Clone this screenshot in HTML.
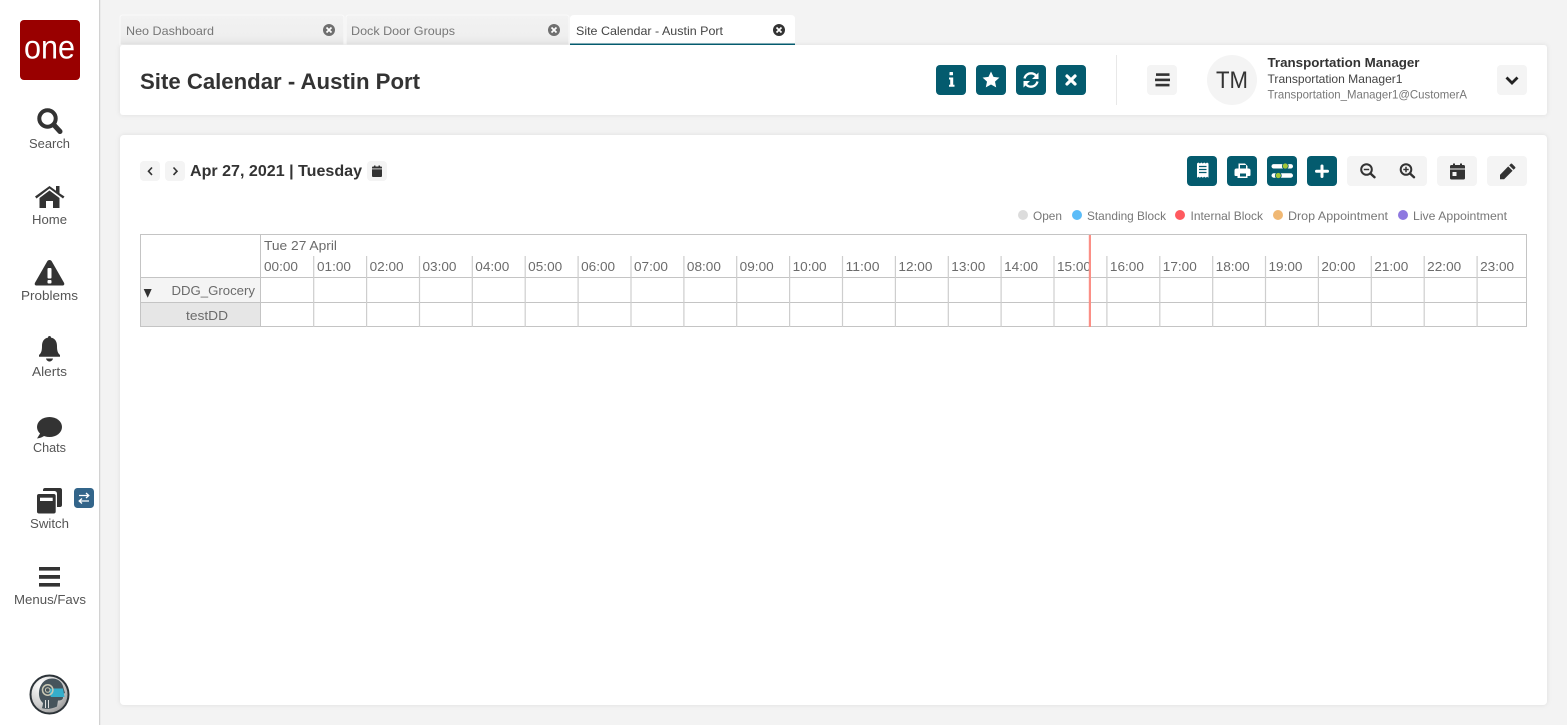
<!DOCTYPE html>
<html lang="en">
<head>
<meta charset="utf-8">
<title>Site Calendar - Austin Port</title>
<style>
html,body{margin:0;padding:0;width:1567px;height:725px;overflow:hidden;background:#f3f3f3}
svg{display:block}
text{font-family:"Liberation Sans",sans-serif;white-space:pre}
.n{font-size:13px;fill:#555}
.h{font-size:13px;fill:#6b6b6b}
.l{font-size:12px;fill:#777}
</style>
</head>
<body>
<svg width="1567" height="725" viewBox="0 0 1567 725" xmlns="http://www.w3.org/2000/svg">
<defs>
<filter id="sh" x="-2%" y="-10%" width="104%" height="120%"><feDropShadow dx="0" dy="0" stdDeviation="2.500" flood-color="#000" flood-opacity=".09"/></filter>
<radialGradient id="av" cx=".3" cy=".25" r=".95"><stop offset="0" stop-color="#ffffff"/><stop offset=".6" stop-color="#c9c9c9"/><stop offset="1" stop-color="#7d7d7d"/></radialGradient>
<linearGradient id="tb" x1="0" y1="0" x2="0" y2="1"><stop offset="0" stop-color="#f2f2f2"/><stop offset=".7" stop-color="#efefef"/><stop offset="1" stop-color="#e6e6e6"/></linearGradient>
</defs>

<!-- sidebar -->
<rect x="0" y="0" width="99" height="725" fill="#fff"/>
<rect x="99" y="0" width="1" height="725" fill="#d2d2d2"/>
<rect x="100" y="0" width="1" height="725" fill="#ebebeb"/>
<rect x="20" y="20" width="60" height="60" rx="4" fill="#990000"/>
<text x="24" y="58.500" fill="#fff" textLength="51" lengthAdjust="spacingAndGlyphs" style="font-size:33px">one</text>

<g fill="#333" stroke="none">
<circle cx="47.500" cy="118.500" r="8.200" fill="none" stroke="#333" stroke-width="4"/>
<line x1="54" y1="125" x2="60" y2="131.500" stroke="#333" stroke-width="5" stroke-linecap="round"/>
<path d="M35 196.500L49.500 186l6.500 4.700V186h3.500v7.300L64.500 196.500l-1.500 2L49.500 188.500 36.500 198.500z"/>
<path d="M39.500 198L49.500 190.500 59.500 198V208H53V201H46V208H39.500z"/>
<path d="M49.500 260c1.200 0 2 .8 2.500 1.700l12 21c.8 1.600 0 2.800-1.800 2.800H36.800c-1.800 0-2.600-1.200-1.800-2.800l12-21c.5-.9 1.300-1.700 2.500-1.700z"/>
<rect x="47.500" y="268" width="4" height="10.500" rx="1" fill="#fff"/>
<rect x="47.500" y="280" width="4" height="3.500" rx="1" fill="#fff"/>
<path d="M49.500 336c.9 0 1.500.6 1.500 1.600 4.200.8 6 4.200 6 8.400 0 5 .8 7 3 9v1.800H39v-1.800c2.200-2 3-4 3-9 0-4.200 1.800-7.600 6-8.400 0-1 .6-1.600 1.500-1.600z"/>
<path d="M46 358.500h7c-.4 1.800-1.800 3-3.500 3s-3.100-1.200-3.500-3z"/>
<ellipse cx="49.500" cy="427" rx="12.500" ry="10"/>
<path d="M41 432l-4 6.500c3.500-.4 7-2 9-4z"/>
<path d="M45 488h15c1.200 0 2 .8 2 2v15c0 1.200-.8 2-2 2h-3v-13c0-2-1-3-3-3H43v-1c0-1.200.8-2 2-2z"/>
<rect x="37" y="494" width="18.700" height="19.500" rx="2"/>
<rect x="40" y="497.700" width="12.700" height="3.300" fill="#fff"/>
<rect x="39" y="567" width="21" height="3.600"/>
<rect x="39" y="575" width="21" height="3.800"/>
<rect x="39" y="583" width="21" height="3.600"/>
</g>
<rect x="74" y="488" width="20" height="20" rx="3.500" fill="#33658a"/>
<path d="M79 495.500h9.500M86 493l2.800 2.500-2.800 2.500M89 501h-9.500M82 498.500L79.200 501l2.800 2.500" fill="none" stroke="#fff" stroke-width="1.300"/>

<text class="n" x="29" y="148" textLength="41" lengthAdjust="spacingAndGlyphs">Search</text>
<text class="n" x="32" y="224" textLength="35" lengthAdjust="spacingAndGlyphs">Home</text>
<text class="n" x="21" y="300" textLength="57" lengthAdjust="spacingAndGlyphs">Problems</text>
<text class="n" x="32" y="376" textLength="35" lengthAdjust="spacingAndGlyphs">Alerts</text>
<text class="n" x="33" y="452" textLength="33" lengthAdjust="spacingAndGlyphs">Chats</text>
<text class="n" x="30" y="528" textLength="39" lengthAdjust="spacingAndGlyphs">Switch</text>
<text class="n" x="14" y="604" textLength="72" lengthAdjust="spacingAndGlyphs">Menus/Favs</text>

<!-- avatar -->
<circle cx="49.500" cy="694.500" r="19" fill="url(#av)" stroke="#2c3338" stroke-width="2"/>
<path d="M42 708c.5-2 1-3.500 1-5-2.500-2-4.500-6-4-11 .7-8 6-13.500 13-13.500 6 0 10.500 3.500 11.500 9.500l1.500 5-2 1v3.500c0 2.200-2 3-5 3l-1 6c-5 2.500-11 3-15.500 1.500z" fill="#46545c"/>
<path d="M50 688.500h13l1.500 8.500H51c-1.500-2.500-2-6-1-8.500z" fill="#35aecb"/>
<circle cx="47.700" cy="690" r="5.200" fill="none" stroke="#c9c8b4" stroke-width="1.500"/>
<circle cx="47.700" cy="690" r="2.300" fill="none" stroke="#c9c8b4" stroke-width="1"/>
<path d="M45.500 700v8M48.500 700v8" stroke="#e0e0e0" stroke-width="1"/>

<!-- tabs -->
<path d="M120 45V18q0-3 3-3h218q3 0 3 3v27z" fill="url(#tb)" stroke="#fafafa" stroke-width="1"/>
<path d="M346 45V18q0-3 3-3h217q3 0 3 3v27z" fill="url(#tb)" stroke="#fafafa" stroke-width="1"/>
<path d="M570 45V19q0-4 4-4h217q4 0 4 4v26z" fill="#fff"/>
<text class="l" x="126" y="35" textLength="88" lengthAdjust="spacingAndGlyphs">Neo Dashboard</text>
<text class="l" x="351" y="35" textLength="104" lengthAdjust="spacingAndGlyphs">Dock Door Groups</text>
<text class="l" x="576" y="35" textLength="147" lengthAdjust="spacingAndGlyphs" style="fill:#444">Site Calendar - Austin Port</text>
<g stroke="#fff" stroke-width="1.700">
<circle cx="329" cy="30" r="6" fill="#6f6f6f" stroke="none"/><path d="M326.500 27.500l5 5m0-5l-5 5"/>
<circle cx="554" cy="30" r="6" fill="#6f6f6f" stroke="none"/><path d="M551.500 27.500l5 5m0-5l-5 5"/>
<circle cx="779" cy="30" r="6" fill="#333" stroke="none"/><path d="M776.500 27.500l5 5m0-5l-5 5"/>
</g>

<!-- header card -->
<rect x="120" y="45" width="1427" height="70" rx="3" fill="#fff" filter="url(#sh)"/>
<rect x="570" y="43.500" width="225" height="1.500" fill="#045b6e"/>
<text x="140" y="89" font-weight="700" style="font-size:22px;fill:#333" textLength="280" lengthAdjust="spacingAndGlyphs">Site Calendar - Austin Port</text>
<g fill="#045b6e">
<rect x="936" y="65" width="30" height="30" rx="4"/>
<rect x="976" y="65" width="30" height="30" rx="4"/>
<rect x="1016" y="65" width="30" height="30" rx="4"/>
<rect x="1056" y="65" width="30" height="30" rx="4"/>
</g>
<g fill="#fff">
<rect x="949.500" y="72" width="3.500" height="3.300" rx=".6"/>
<path d="M949 77.500h4.200v7.300h1.300v2h-5.500v-2h1.200v-5.300H949z"/>
<path d="M991 71.500l2.500 5.400 5.900.7-4.400 4 1.200 5.800-5.200-2.900-5.200 2.900 1.200-5.800-4.400-4 5.900-.7z"/>
</g>
<g fill="none" stroke="#fff" stroke-width="2.300">
<path d="M1024.500 78.500c.7-3 3.300-5.200 6.500-5.200 2.200 0 4 1 5.200 2.500"/>
<path d="M1037.500 81.500c-.7 3-3.300 5.200-6.500 5.200-2.200 0-4-1-5.200-2.500"/>
<path d="M1067 76l8 8m0-8l-8 8" stroke-width="3.200" stroke-linecap="round"/>
</g>
<path d="M1038.500 72.500v6.500h-6.500zM1023.500 87.500V81h6.500z" fill="#fff"/>
<rect x="1116" y="55" width="1" height="50" fill="#e8e8e8"/>
<rect x="1147" y="65" width="30" height="30" rx="4" fill="#f4f4f4"/>
<g fill="#333">
<rect x="1156" y="73.300" width="13.500" height="2.600"/>
<rect x="1155" y="78.600" width="15" height="2.600"/>
<rect x="1155.500" y="83.800" width="14" height="2.600"/>
</g>
<circle cx="1232" cy="80" r="25" fill="#f4f4f4"/>
<text x="1216" y="88" style="font-size:24px;fill:#333" textLength="32" lengthAdjust="spacingAndGlyphs">TM</text>
<text x="1267.500" y="67" font-weight="700" style="font-size:13px;fill:#333" textLength="152" lengthAdjust="spacingAndGlyphs">Transportation Manager</text>
<text x="1267.500" y="83" style="font-size:12px;fill:#444" textLength="135" lengthAdjust="spacingAndGlyphs">Transportation Manager1</text>
<text x="1267.500" y="98.500" style="font-size:12px;fill:#777" textLength="199.500" lengthAdjust="spacingAndGlyphs">Transportation_Manager1@CustomerA</text>
<rect x="1497" y="65" width="30" height="30" rx="4" fill="#f4f4f4"/>
<path d="M1506.500 77.500l5.500 5.500 5.500-5.500" fill="none" stroke="#222" stroke-width="2.800"/>

<!-- main card -->
<rect x="120" y="135" width="1427" height="570" rx="4" fill="#fff" filter="url(#sh)"/>

<!-- date nav -->
<rect x="140" y="161" width="20" height="20" rx="4" fill="#f4f4f4"/>
<rect x="165" y="161" width="20" height="20" rx="4" fill="#f4f4f4"/>
<rect x="367" y="161" width="20" height="20" rx="4" fill="#f4f4f4"/>
<path d="M152 167.500l-3.500 3.700 3.500 3.700M173.500 167.500l3.500 3.700-3.500 3.700" fill="none" stroke="#333" stroke-width="1.600"/>
<text x="190" y="176" font-weight="700" style="font-size:16px;fill:#333" textLength="172" lengthAdjust="spacingAndGlyphs">Apr 27, 2021 | Tuesday</text>
<path d="M373 166.500h8a1 1 0 0 1 1 1V176a1 1 0 0 1-1 1h-8a1 1 0 0 1-1-1v-8.500a1 1 0 0 1 1-1z" fill="#333"/>
<rect x="374" y="165.500" width="1.500" height="2" fill="#333"/><rect x="378.500" y="165.500" width="1.500" height="2" fill="#333"/>
<rect x="372" y="168.500" width="10" height=".8" fill="#f4f4f4"/>

<!-- toolbar -->
<g fill="#045b6e">
<rect x="1187" y="156" width="30" height="30" rx="4"/>
<rect x="1227" y="156" width="30" height="30" rx="4"/>
<rect x="1267" y="156" width="30" height="30" rx="4"/>
<rect x="1307" y="156" width="30" height="30" rx="4"/>
</g>
<path d="M1197 163.500l1.400-1 1.500 1 1.400-1 1.500 1 1.400-1 1.500 1 1.400-1 1.400 1v14.300l-1.400-1-1.400 1-1.500-1-1.400 1-1.500-1-1.400 1-1.500-1-1.400 1z" fill="#fff"/>
<path d="M1199 166.500h7.500M1199 169.500h7.500M1199 172.500h7.500" stroke="#045b6e" stroke-width="1.300"/>
<path d="M1238.500 163.500h6.500l2.500 2.500v2.500h1q2 0 2 2v4.500q0 1-1 1h-2v2h-10v-2h-2q-1 0-1-1v-4.500q0-2 2-2h2z" fill="#fff"/>
<rect x="1240" y="165" width="6" height="3.500" fill="#045b6e"/>
<rect x="1240" y="173.500" width="6" height="3" fill="#045b6e"/>
<rect x="1271.500" y="164.100" width="21.500" height="4.400" rx="2.200" fill="#fff"/>
<rect x="1271.500" y="173.300" width="21.500" height="4.400" rx="2.200" fill="#fff"/>
<circle cx="1285.300" cy="166" r="3" fill="#a4c639" stroke="#045b6e" stroke-width=".8"/>
<circle cx="1278.300" cy="175.500" r="3" fill="#a4c639" stroke="#045b6e" stroke-width=".8"/>
<path d="M1322 166v10.500M1316.500 171.200h11" stroke="#fff" stroke-width="3" stroke-linecap="round"/>
<rect x="1347" y="156" width="80" height="30" rx="4" fill="#f4f4f4"/>
<rect x="1437" y="156" width="40" height="30" rx="4" fill="#f4f4f4"/>
<rect x="1487" y="156" width="40" height="30" rx="4" fill="#f4f4f4"/>
<g fill="none" stroke="#333">
<circle cx="1366.500" cy="169.500" r="5.300" stroke-width="2"/>
<circle cx="1406" cy="169.500" r="5.300" stroke-width="2"/>
<path d="M1370.500 173.500l4 3.700M1410 173.500l4 3.700" stroke-width="2.400" stroke-linecap="round"/>
<path d="M1363.800 169.500h5.400M1403.300 169.500h5.400M1406 166.800v5.400" stroke-width="1.500"/>
</g>
<path d="M1451.500 165h12a1.500 1.500 0 0 1 1.500 1.500V178a1.500 1.500 0 0 1-1.500 1.500h-12A1.500 1.500 0 0 1 1450 178v-11.500a1.500 1.500 0 0 1 1.500-1.500z" fill="#333"/>
<rect x="1453" y="163.500" width="2" height="3" fill="#333"/><rect x="1460" y="163.500" width="2" height="3" fill="#333"/>
<rect x="1450" y="168.500" width="15" height="1" fill="#f4f4f4"/>
<rect x="1452.500" y="172" width="4" height="4" fill="#f4f4f4"/>
<path d="M1512 163.800l3.200 3.200a.9.9 0 0 1 0 1.200l-1.600 1.600-4.400-4.400 1.600-1.600a.8.8 0 0 1 1.200 0zM1508.200 166.400l4.400 4.400-8.500 8.400-4.100.1v-4.400z" fill="#333"/>

<!-- legend -->
<circle cx="1023" cy="215" r="5" fill="#dcdcdc"/>
<circle cx="1077" cy="215" r="5" fill="#5bbcf8"/>
<circle cx="1180" cy="215" r="5" fill="#ff5a5f"/>
<circle cx="1278" cy="215" r="5" fill="#f0b874"/>
<circle cx="1403" cy="215" r="5" fill="#8e78e0"/>
<text class="l" x="1033" y="220" textLength="29" lengthAdjust="spacingAndGlyphs">Open</text>
<text class="l" x="1087" y="220" textLength="79" lengthAdjust="spacingAndGlyphs">Standing Block</text>
<text class="l" x="1190.500" y="220" textLength="72.500" lengthAdjust="spacingAndGlyphs">Internal Block</text>
<text class="l" x="1288" y="220" textLength="100" lengthAdjust="spacingAndGlyphs">Drop Appointment</text>
<text class="l" x="1413" y="220" textLength="94" lengthAdjust="spacingAndGlyphs">Live Appointment</text>

<!-- grid -->
<rect x="141" y="278" width="120" height="24" fill="#f4f4f4"/>
<rect x="141" y="303" width="120" height="23" fill="#e6e6e6"/>
<path d="M143.700 289h8l-4 8.700z" fill="#333"/>
<g fill="#c4c4c4">
<rect x="140" y="234" width="1387" height="1"/>
<rect x="140" y="277" width="1387" height="1"/>
<rect x="140" y="302" width="1387" height="1"/>
<rect x="140" y="326" width="1387" height="1"/>
<rect x="140" y="234" width="1" height="93"/>
<rect x="1526" y="234" width="1" height="93"/>
<rect x="260" y="234" width="1" height="93"/>
</g>
<g fill="#cecece">
<rect x="313.100" y="256" width="1.200" height="71"/><rect x="366" y="256" width="1.200" height="71"/><rect x="418.900" y="256" width="1.200" height="71"/><rect x="471.700" y="256" width="1.200" height="71"/><rect x="524.600" y="256" width="1.200" height="71"/><rect x="577.500" y="256" width="1.200" height="71"/><rect x="630.400" y="256" width="1.200" height="71"/><rect x="683.300" y="256" width="1.200" height="71"/><rect x="736.100" y="256" width="1.200" height="71"/><rect x="789" y="256" width="1.200" height="71"/><rect x="841.900" y="256" width="1.200" height="71"/><rect x="894.800" y="256" width="1.200" height="71"/><rect x="947.700" y="256" width="1.200" height="71"/><rect x="1000.500" y="256" width="1.200" height="71"/><rect x="1053.400" y="256" width="1.200" height="71"/><rect x="1106.300" y="256" width="1.200" height="71"/><rect x="1159.200" y="256" width="1.200" height="71"/><rect x="1212.100" y="256" width="1.200" height="71"/><rect x="1264.900" y="256" width="1.200" height="71"/><rect x="1317.800" y="256" width="1.200" height="71"/><rect x="1370.700" y="256" width="1.200" height="71"/><rect x="1423.600" y="256" width="1.200" height="71"/><rect x="1476.500" y="256" width="1.200" height="71"/>
</g>
<text class="h" x="264" y="250" textLength="73" lengthAdjust="spacingAndGlyphs">Tue 27 April</text>
<g>
<text class="h" x="264" y="271" textLength="34" lengthAdjust="spacingAndGlyphs">00:00</text>
<text class="h" x="317" y="271" textLength="34" lengthAdjust="spacingAndGlyphs">01:00</text>
<text class="h" x="369.600" y="271" textLength="34" lengthAdjust="spacingAndGlyphs">02:00</text>
<text class="h" x="422.500" y="271" textLength="34" lengthAdjust="spacingAndGlyphs">03:00</text>
<text class="h" x="475.300" y="271" textLength="34" lengthAdjust="spacingAndGlyphs">04:00</text>
<text class="h" x="528.200" y="271" textLength="34" lengthAdjust="spacingAndGlyphs">05:00</text>
<text class="h" x="581.100" y="271" textLength="34" lengthAdjust="spacingAndGlyphs">06:00</text>
<text class="h" x="634" y="271" textLength="34" lengthAdjust="spacingAndGlyphs">07:00</text>
<text class="h" x="686.900" y="271" textLength="34" lengthAdjust="spacingAndGlyphs">08:00</text>
<text class="h" x="739.700" y="271" textLength="34" lengthAdjust="spacingAndGlyphs">09:00</text>
<text class="h" x="792.600" y="271" textLength="34" lengthAdjust="spacingAndGlyphs">10:00</text>
<text class="h" x="845.500" y="271" textLength="34" lengthAdjust="spacingAndGlyphs">11:00</text>
<text class="h" x="898.400" y="271" textLength="34" lengthAdjust="spacingAndGlyphs">12:00</text>
<text class="h" x="951.300" y="271" textLength="34" lengthAdjust="spacingAndGlyphs">13:00</text>
<text class="h" x="1004.100" y="271" textLength="34" lengthAdjust="spacingAndGlyphs">14:00</text>
<text class="h" x="1057" y="271" textLength="34" lengthAdjust="spacingAndGlyphs">15:00</text>
<text class="h" x="1109.900" y="271" textLength="34" lengthAdjust="spacingAndGlyphs">16:00</text>
<text class="h" x="1162.800" y="271" textLength="34" lengthAdjust="spacingAndGlyphs">17:00</text>
<text class="h" x="1215.700" y="271" textLength="34" lengthAdjust="spacingAndGlyphs">18:00</text>
<text class="h" x="1268.500" y="271" textLength="34" lengthAdjust="spacingAndGlyphs">19:00</text>
<text class="h" x="1321.400" y="271" textLength="34" lengthAdjust="spacingAndGlyphs">20:00</text>
<text class="h" x="1374.300" y="271" textLength="34" lengthAdjust="spacingAndGlyphs">21:00</text>
<text class="h" x="1427.200" y="271" textLength="34" lengthAdjust="spacingAndGlyphs">22:00</text>
<text class="h" x="1480.100" y="271" textLength="34" lengthAdjust="spacingAndGlyphs">23:00</text>
</g>
<text class="h" x="171.500" y="295" textLength="83.500" lengthAdjust="spacingAndGlyphs">DDG_Grocery</text>
<text class="h" x="186" y="320" textLength="42" lengthAdjust="spacingAndGlyphs">testDD</text>
<rect x="1088.800" y="235" width="2.200" height="92" fill="#fb8f86"/>
</svg>
</body>
</html>
